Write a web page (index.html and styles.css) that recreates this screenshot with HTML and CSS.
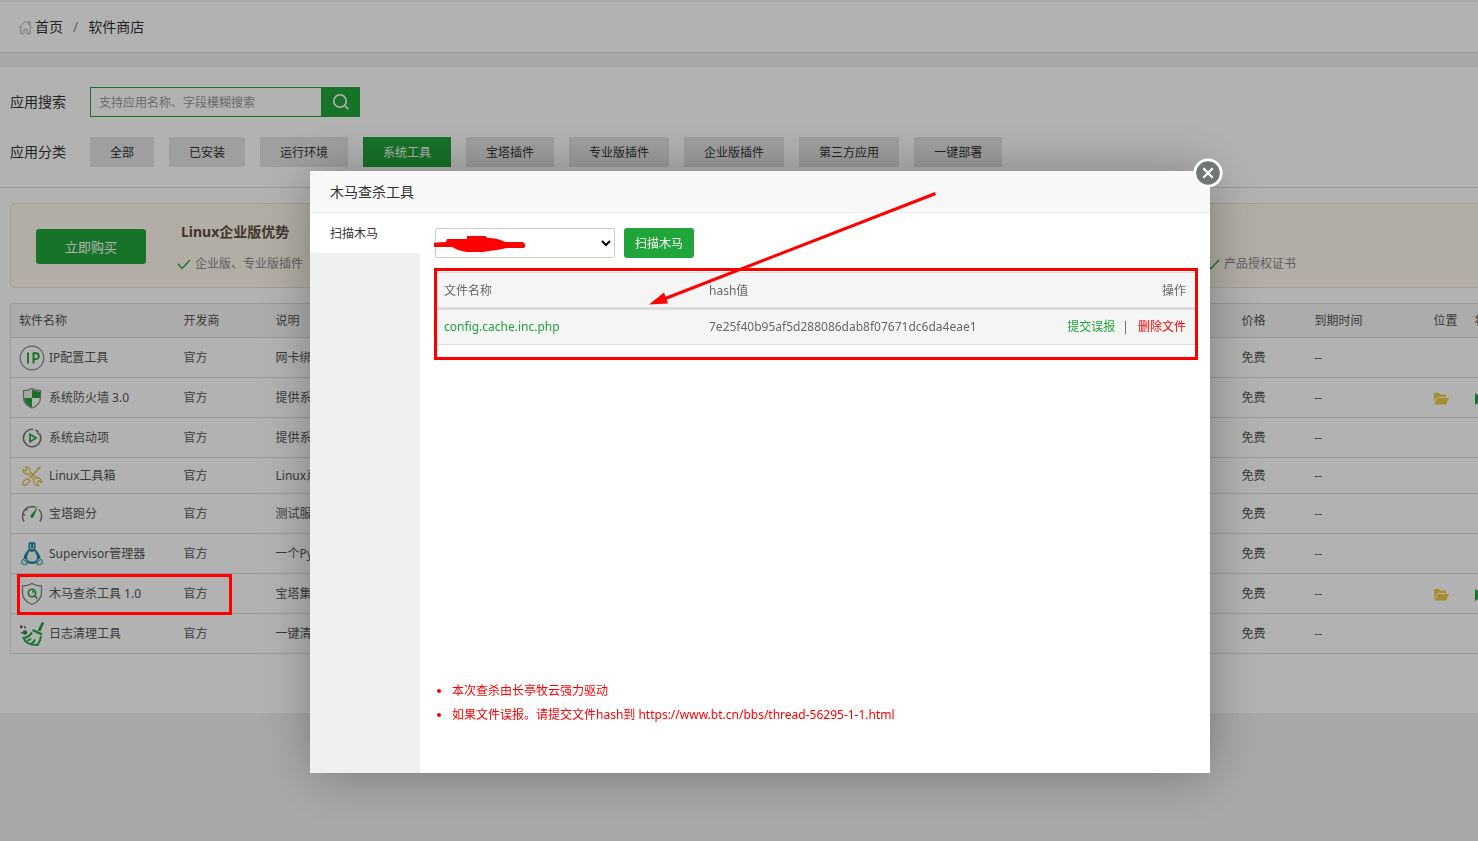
FILE: index.html
```html
<!DOCTYPE html>
<html lang="zh-CN">
<head>
<meta charset="utf-8">
<title>软件商店</title>
<link rel="stylesheet" href="styles.css">
</head>
<body>
<div class="page">
  <header class="crumbs">
    <svg class="home" width="15" height="15" viewBox="0 0 15 15" fill="none" stroke="#aaa"><path d="M.8 7.7 7.5 1l6.7 6.7M2.8 6.5v7.3H6V9.3h3v4.5h3.2V6.5M10.5 3.5V1.500h1.600v3.500"/></svg>
    <a href="#">首页</a><span class="slash">/</span><a href="#">软件商店</a>
  </header>

  <main class="store">
    <section class="filters">
      <div class="filter-row">
        <label class="filter-label" for="q">应用搜索</label>
        <div class="search">
          <input id="q" type="text" placeholder="支持应用名称、字段模糊搜索">
          <button type="button" aria-label="搜索"><svg width="18" height="18" viewBox="0 0 18 18" fill="none" stroke="#fff" stroke-width="1.600"><circle cx="8" cy="8" r="6.200"/><path d="m12.500 12.500 4 3.700"/></svg></button>
        </div>
      </div>
      <div class="filter-row">
        <span class="filter-label">应用分类</span>
        <nav class="tabs">
          <button type="button">全部</button><button type="button">已安装</button><button type="button">运行环境</button><button type="button" class="on">系统工具</button><button type="button">宝塔插件</button><button type="button">专业版插件</button><button type="button">企业版插件</button><button type="button">第三方应用</button><button type="button">一键部署</button>
        </nav>
      </div>
    </section>

    <section class="promo">
      <button type="button" class="buy">立即购买</button>
      <div class="promo-body">
        <h2>Linux企业版优势</h2>
        <ul>
          <li><svg width="14" height="12" viewBox="0 0 14 12" fill="none" stroke="#20a53a" stroke-width="1.300"><path d="m1 6 4 4.500L13 2"/></svg>企业版、专业版插件</li>
          <li><svg width="14" height="12" viewBox="0 0 14 12" fill="none" stroke="#20a53a" stroke-width="1.300"><path d="m1 6 4 4.500L13 2"/></svg>产品授权证书</li>
        </ul>
      </div>
    </section>

    <table class="apps">
      <colgroup><col class="c-name"><col class="c-dev"><col><col class="c-price"><col class="c-date"><col class="c-pos"><col class="c-state"></colgroup>
      <thead><tr><th>软件名称</th><th>开发商</th><th>说明</th><th>价格</th><th>到期时间</th><th>位置</th><th>状态</th></tr></thead>
      <tbody>
        <tr><td><div class="app"><svg viewBox="0 0 26 26" fill="none"><circle cx="13" cy="13" r="11.800" stroke="#888" stroke-width="1.200"/><path d="M9 7.500v11M14.500 18.500V8.300h2.300a3 3 0 0 1 0 6h-2.300" stroke="#20a53a" stroke-width="1.900"/></svg>IP配置工具</div></td><td>官方</td><td>网卡绑定</td><td>免费</td><td>--</td><td></td><td></td></tr>
        <tr><td><div class="app"><svg viewBox="0 0 26 26" fill="none"><path d="M13 4.500V13H5V6.500c3 0 5-.4 8-2Z" fill="#eee"/><path d="M13 4.500c3 1.600 5 2 8 2V13h-8ZM13 13v9.500C8.500 20.500 5.500 17.500 5 13Z" fill="#20a53a"/><path d="M13 3.500c3 1.800 5.500 2.200 8.500 2.200v6.800c0 5-3.500 8.500-8.500 10.500-5-2-8.500-5.500-8.500-10.500V5.700c3 0 5.500-.4 8.500-2.200Z" stroke="#888" stroke-width="1.200"/></svg>系统防火墙 3.0</div></td><td>官方</td><td>提供系统</td><td>免费</td><td>--</td><td><svg class="folder" viewBox="0 0 15 12" fill="#f0ca45"><path d="M0 1q0-1 1-1h4l1.500 1.500H11q1 0 1 1V4H4L1.500 6 0 10ZM4 5h11l-3 6.500H.5L2.700 6Z"/></svg></td><td><svg class="play" viewBox="0 0 9 12" fill="#20a53a"><path d="M0 0v12l9-6Z"/></svg></td></tr>
        <tr><td><div class="app"><svg viewBox="0 0 26 26" fill="none"><path d="M14 4.400A8.700 8.700 0 1 0 20.500 8.500M16.500 5l2.500 1.500M19 6v3.500" stroke="#777" stroke-width="1.500"/><path d="M11 9.300v7.400l6-3.700Z" stroke="#20a53a" stroke-width="1.700"/></svg>系统启动项</div></td><td>官方</td><td>提供系统</td><td>免费</td><td>--</td><td></td><td></td></tr>
        <tr class="short"><td><div class="app"><svg viewBox="0 0 26 26" fill="none" stroke="#e0b82f" stroke-width="1.100"><path d="M4 6.500 6.500 8 8 6.500 6.500 4A4 4 0 0 1 11 9l6 6a4 4 0 0 1 5.500 4.500L20 17.500 18 20l2 2.300a4 4 0 0 1-5-5.500l-6-6A4 4 0 0 1 4 6.500ZM21.500 4l-9 9M21.500 4l-3 1.500M9 15.500l2 2-3.500 4.300q-2 1.200-3.500-.3T4.500 18Z"/></svg>Linux工具箱</div></td><td>官方</td><td>Linux系统</td><td>免费</td><td>--</td><td></td><td></td></tr>
        <tr><td><div class="app"><svg viewBox="0 0 26 26" fill="none"><path d="M5 20.500C2 16 3.500 6 13 5.500c2 0 3 .3 4 .8M20 8.500c3.500 4 3 8.500 1 12M4 13.500l2 .5M7 8l1.500 1.500" stroke="#777" stroke-width="1.500"/><path d="M19 5.500 14.500 16q-1.500 1.500-2.500.5t0-2.500Z" fill="#20a53a"/></svg>宝塔跑分</div></td><td>官方</td><td>测试服务</td><td>免费</td><td>--</td><td></td><td></td></tr>
        <tr><td><div class="app"><svg viewBox="0 0 26 26" fill="none"><path d="M9.500 2q3.500-2 7 0v6.500q5 5 5 9l-2.500 1q-.5 4.500-6 4.500t-6-4.500l-2.500-1q0-4 5-9Z" fill="#168ca5"/><path d="M10.500 10q2.500 2 5 0 3.500 5 2 9-4.500 3.500-9 0-1.500-4 2-9ZM11 3.500h1.200V5.500H11Zm3 0h1.200V5.500H14Z" fill="#f5f5f5"/><path d="m10.500 6.500 2.500 1.500 2.500-1.500" stroke="#fff"/><path d="M3 19q1-1.500 3 .5l2.500 3.500q-3 2-6-.5ZM23 19q-1-1.500-3 .5L17.500 23q3 2 6-.5Z" fill="#eee" stroke="#168ca5" stroke-width=".9"/></svg>Supervisor管理器</div></td><td>官方</td><td>一个Python</td><td>免费</td><td>--</td><td></td><td></td></tr>
        <tr><td><div class="app"><svg viewBox="0 0 26 26" fill="none"><path d="M13 2.500q4.500 2.500 9.500 2.500v7q0 7.500-9.500 11.500Q3.500 19.500 3.500 12V5Q8.500 5 13 2.500Z" stroke="#888" stroke-width="1.300"/><circle cx="13" cy="12" r="3.700" stroke="#20a53a" stroke-width="1.600"/><path d="m15.500 14.500 3 3.200M13 10.300q1.500 0 1.700 1.700" stroke="#20a53a" stroke-width="1.600"/></svg>木马查杀工具 1.0</div></td><td>官方</td><td>宝塔集成</td><td>免费</td><td>--</td><td><svg class="folder" viewBox="0 0 15 12" fill="#f0ca45"><path d="M0 1q0-1 1-1h4l1.500 1.500H11q1 0 1 1V4H4L1.500 6 0 10ZM4 5h11l-3 6.500H.5L2.700 6Z"/></svg></td><td><svg class="play" viewBox="0 0 9 12" fill="#20a53a"><path d="M0 0v12l9-6Z"/></svg></td></tr>
        <tr><td><div class="app"><svg viewBox="0 0 26 26" fill="none"><path d="m24 1.500-4 8.500" stroke="#20a53a" stroke-width="2.800"/><path d="m13.500 9 9.500 4.500" stroke="#20a53a" stroke-width="2.400"/><path d="M13 11.500q-3 5-8.500 5.500 2.500 7 14 7 3-4 3.500-9M8 19.500q2.500 0 4-2M12.500 22.500q2.500-1 3.500-4" stroke="#20a53a" stroke-width="2"/><circle cx="6" cy="11.500" r="2.300" fill="#2c8c55"/><path d="M1 4.500h2.500V7H1ZM5 5.500h1.800v1.800H5ZM2 11h1.500v1.500H2Z" fill="#555"/></svg>日志清理工具</div></td><td>官方</td><td>一键清理</td><td>免费</td><td>--</td><td></td><td></td></tr>
      </tbody>
    </table>
  </main>
</div>

<div class="overlay">
  <section class="modal" role="dialog" aria-labelledby="dlg">
    <h1 id="dlg">木马查杀工具</h1>
    <button type="button" class="close" aria-label="关闭"><svg width="30" height="30" viewBox="0 0 30 30"><circle cx="15" cy="15" r="13.200" fill="#717773" stroke="#fff" stroke-width="2.800"/><path d="m10.300 10.300 9.400 9.400m0-9.400-9.400 9.400" stroke="#fff" stroke-width="2.200"/></svg></button>
    <div class="modal-main">
      <nav class="side"><a href="#">扫描木马</a></nav>
      <div class="panel">
        <div class="tools">
          <select aria-label="网站"><option></option></select>
          <button type="button">扫描木马</button>
        </div>
        <table class="files">
          <thead><tr><th class="f-name">文件名称</th><th>hash值</th><th class="f-act">操作</th></tr></thead>
          <tbody><tr><td><a href="#">config.cache.inc.php</a></td><td>7e25f40b95af5d288086dab8f07671dc6da4eae1</td><td class="f-act"><a href="#">提交误报</a><span class="bar">|</span><a href="#" class="del">删除文件</a></td></tr></tbody>
        </table>
        <ul class="notes">
          <li>本次查杀由长亭牧云强力驱动</li>
          <li>如果文件误报。请提交文件hash到 https://www.bt.cn/bbs/thread-56295-1-1.html</li>
        </ul>
      </div>
    </div>
  </section>
</div>

<svg class="marks" width="1478" height="841" viewBox="0 0 1478 841" fill="none" stroke="#f00">
  <rect x="18.500" y="575.500" width="212" height="38" stroke-width="3"/>
  <rect x="435.500" y="269.500" width="761" height="89" stroke-width="3"/>
  <path d="M935.500 193.500 664 299" stroke-width="3"/>
  <path d="m649 304.500 15-12 4 11Z" fill="#f00" stroke="none"/>
  <path d="M434 243q5-1 12-1l1-3h20v-3h18l3 2q10 0 17 4l18 0q4 3 1 6l-17 0-10 2-8 1-6 1h-17l-8-2-6-3h-18Z" fill="#f00" stroke="none"/>
</svg>
</body>
</html>
```

FILE: styles.css
```css
* { box-sizing: border-box; }
body {
  margin: 0;
  background: #f1f1f1;
  color: #555;
  font: 12px/20px "Noto Sans", "Noto Sans CJK SC", sans-serif;
}
a { color: inherit; text-decoration: none; }
button, input, select { font: inherit; }
button { border: 0; padding: 0; cursor: pointer; }
ul { margin: 0; padding: 0; }
.page { min-height: 100vh; overflow: hidden; }

.crumbs {
  display: flex;
  align-items: center;
  height: 51px;
  margin-top: 2px;
  padding-left: 18px;
  background: #fff;
  border-bottom: 1px solid #ddd;
  color: #333;
  font-size: 14px;
}
.home { margin-right: 2px; }
.slash { margin: 0 10px; color: #888; }

.store { margin-top: 14px; padding-bottom: 59px; background: #fff; }
.filters {
  display: flex;
  flex-direction: column;
  gap: 20px;
  padding: 20px 10px;
  border-bottom: 1px solid #ddd;
}
.filter-row { display: flex; align-items: center; }
.filter-label { width: 80px; color: #333; font-size: 14px; }
.search { display: flex; width: 270px; height: 30px; }
.search input {
  flex: 1;
  min-width: 0;
  padding: 2px 8px 0;
  border: 1px solid #20a53a;
  border-right: 0;
  background: #fff;
}
.search input::placeholder { color: #999; }
.search button { display: grid; place-items: center; width: 39px; background: #20a53a; }
.tabs { display: flex; gap: 15px; }
.tabs button { height: 30px; padding: 2px 20px 0; background: #e4e4e4; color: #333; }
.tabs .on { background: #20a53a; color: #fff; }

.promo {
  display: flex;
  align-items: center;
  height: 85px;
  margin: 15px -10px 15px 10px;
  padding: 2px 0 0 25px;
  background: #fff8ec;
  border: 1px solid #eee6d3;
  border-radius: 4px;
}
.buy { width: 110px; height: 35px; border-radius: 3px; background: #20a53a; color: #fff; font-size: 13px; }
.promo-body { flex: 1; margin-left: 31px; }
.promo h2 { margin: 2px 0 12px 4px; color: #5e5040; font-size: 14px; line-height: 20px; }
.promo ul { display: flex; justify-content: space-between; padding-right: 191px; list-style: none; color: #888; }
.promo li { display: flex; align-items: center; gap: 4px; }

.apps {
  width: calc(100% + 24px);
  margin-left: 10px;
  table-layout: fixed;
  border: 1px solid #ddd;
  border-collapse: collapse;
}
.apps th, .apps td { height: 40px; padding: 0 8px; border-bottom: 1px solid #ddd; text-align: left; font-weight: 400; white-space: nowrap; }
.apps th { height: 34px; background: #f6f6f6; }
.apps .short td { height: 36px; }
.c-name { width: 165px; }
.c-dev { width: 92px; }
.c-price { width: 73px; }
.c-date { width: 119px; }
.c-pos { width: 41px; }
.c-state { width: 45px; }
.app { display: flex; align-items: center; gap: 4px; }
.app svg { width: 26px; height: 26px; }
.folder { display: block; width: 15px; height: 12px; margin-top: 3px; }
.play { display: block; width: 9px; height: 12px; margin-top: 3px; }

.overlay {
  position: fixed;
  inset: 0;
  display: flex;
  justify-content: center;
  align-items: flex-start;
  padding: 171px 0 0 42px;
  background: rgba(0, 0, 0, .3);
}
.modal {
  position: relative;
  display: flex;
  flex-direction: column;
  width: 900px;
  min-height: 602px;
  background: #fff;
  box-shadow: 1px 1px 50px rgba(0, 0, 0, .3);
}
.modal h1 {
  margin: 0;
  padding: 0 20px;
  border-bottom: 1px solid #eee;
  background: #f8f8f8;
  color: #333;
  font-size: 14px;
  font-weight: 400;
  line-height: 41px;
}
.close { position: absolute; top: -13px; right: -13px; width: 30px; height: 30px; background: none; }
.close svg { display: block; }
.modal-main { display: flex; flex: 1; }
.side { width: 110px; background: #f0f0f0; }
.side a { display: block; padding: 2px 0 0 20px; background: #fff; color: #333; line-height: 38px; }
.panel { display: flex; flex: 1; flex-direction: column; padding: 15px 15px 46px; }
.tools { display: flex; gap: 9px; margin-bottom: 14px; }
.tools select { width: 180px; height: 30px; border: 1px solid #ccc; border-radius: 2px; background: #fff; }
.tools button { width: 70px; height: 30px; padding-top: 2px; border-radius: 3px; background: #20a53a; color: #fff; }
.files { width: 100%; border-top: 1px solid #ddd; border-collapse: collapse; background: #f5f5f5; color: #666; }
.files th, .files td { height: 36px; padding: 0 9px; text-align: left; font-weight: 400; }
.files th { padding-top: 2px; border-bottom: 3px solid #ddd; }
.files td { border-bottom: 1px solid #ddd; }
.files .f-name { width: 265px; }
.files .f-act { text-align: right; }
.files a { color: #20a53a; }
.files .del { color: #f00; }
.bar { margin: 0 9px 0 7px; }
.notes { margin-top: auto; padding-left: 17px; color: #f00; line-height: 24px; }

.marks { position: absolute; top: 0; left: 0; pointer-events: none; }
```
